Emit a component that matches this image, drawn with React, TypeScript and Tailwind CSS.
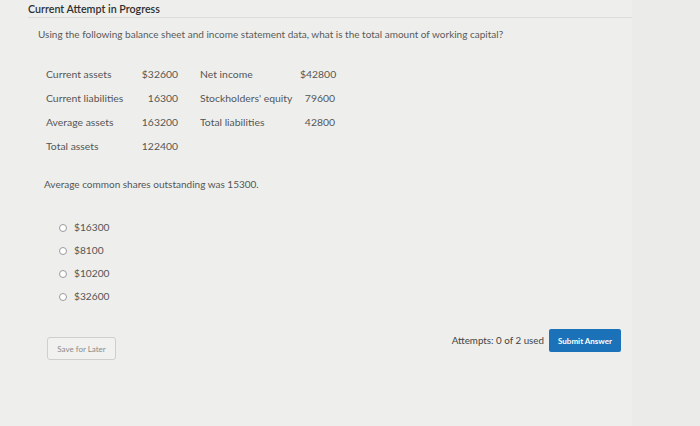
import React from 'react';

const rows = [
  { label: 'Current assets', value: '$32600', label2: 'Net income', value2: '$42800' },
  { label: 'Current liabilities', value: '16300', label2: "Stockholders' equity", value2: '79600' },
  { label: 'Average assets', value: '163200', label2: 'Total liabilities', value2: '42800' },
  { label: 'Total assets', value: '122400', label2: '', value2: '' },
];

const options = ['$16300', '$8100', '$10200', '$32600'];

export default function App() {
  return (
    <div className="h-[426px] w-[700px] overflow-hidden bg-[#ebecea] font-['Lato',sans-serif] text-[#4a4a4a]">
      <div className="flex h-full w-[632px] flex-col bg-[#eeefed] pl-[28px]">
        {/* Header */}
        <div className="h-[18px] border-b border-[#dcdddb] pt-[1px] text-[10.7px] font-semibold text-[#2f2f2f]">
          Current Attempt in Progress
        </div>

        {/* Question */}
        <p className="mt-[9px] pl-[10px] text-[10px] text-[#5a5a5a]">
          Using the following balance sheet and income statement data, what is the total amount of working capital?
        </p>

        <div className="mt-[27px] flex flex-col gap-[12px] pl-[18px] text-[10.4px] text-[#555]">
          {rows.map((r) => (
            <div key={r.label} className="flex h-[12px] items-center">
              <span className="w-[95px]">{r.label}</span>
              <span className="w-[37px] text-right">{r.value}</span>
              <span className="ml-[22px] w-[100px]">{r.label2}</span>
              <span className="w-[35px] text-right">{r.value2}</span>
            </div>
          ))}
        </div>

        <p className="mt-[24px] pl-[16px] text-[10px] text-[#555]">Average common shares outstanding was 15300.</p>

        <div className="mt-[30px] flex flex-col gap-[11px] pl-[31px] text-[10.2px] text-[#555]">
          {options.map((o) => (
            <label key={o} className="flex h-[12px] items-center gap-[7px]">
              <span className="h-[8px] w-[8px] rounded-full border border-[#9a9a9a] bg-white" />
              {o}
            </label>
          ))}
        </div>

        <div className="mt-[26px] flex items-start pr-[11px]">
          <button className="mt-[8px] ml-[19px] h-[23px] w-[69px] rounded-[3px] border border-[#cfd0ce] bg-[#f1f2f0] text-[8px] text-[#8a8a8a]">
            Save for Later
          </button>
          <div className="ml-auto flex items-center gap-[5px]">
            <span className="text-[9.8px] text-[#444]">Attempts: 0 of 2 used</span>
            <button className="h-[23px] w-[72px] rounded-[2px] bg-[#1b72b8] text-[8px] font-bold text-white">
              Submit Answer
            </button>
          </div>
        </div>
      </div>
    </div>
  );
}
